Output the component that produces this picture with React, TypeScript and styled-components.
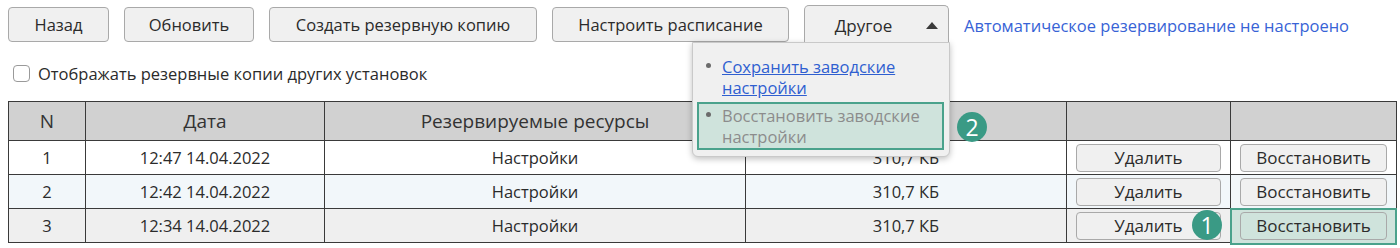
import styled, { createGlobalStyle } from "styled-components";

const GlobalStyle = createGlobalStyle`
  * { box-sizing: border-box; }
  body {
    margin: 0;
    background: #ffffff;
    font-family: "Open Sans", "Noto Sans", sans-serif;
    font-size: 16.5px;
    color: #2b2b2b;
  }
`;

const rows = [
  { n: 1, date: "12:47 14.04.2022", res: "Настройки", size: "310,7 КБ" },
  { n: 2, date: "12:42 14.04.2022", res: "Настройки", size: "310,7 КБ" },
  { n: 3, date: "12:34 14.04.2022", res: "Настройки", size: "310,7 КБ" },
];

const App = () => {
  return (
    <Page>
      <GlobalStyle />
      <Toolbar>
        <ToolButton $w={101}>Назад</ToolButton>
        <ToolButton $w={130}>Обновить</ToolButton>
        <ToolButton $w={268}>Создать резервную копию</ToolButton>
        <ToolButton $w={237}>Настроить расписание</ToolButton>
        <DropWrap>
          <DropTab>
            Другое
            <Caret />
          </DropTab>
          <DropMenu>
            <MenuItem>
              <Bullet />
              <MenuLink>Сохранить заводские настройки</MenuLink>
            </MenuItem>
            <MenuItem $active>
              <Bullet />
              <MenuDisabled>Восстановить заводские настройки</MenuDisabled>
              <Badge $left={258} $top={8}>2</Badge>
            </MenuItem>
          </DropMenu>
        </DropWrap>
        <StatusLink>Автоматическое резервирование не настроено</StatusLink>
      </Toolbar>

      <CheckRow>
        <CheckBox />
        Отображать резервные копии других установок
      </CheckRow>

      <Table>
        <colgroup>
          <col style={{ width: 77 }} />
          <col style={{ width: 239 }} />
          <col style={{ width: 421 }} />
          <col style={{ width: 321 }} />
          <col style={{ width: 164 }} />
          <col style={{ width: 166 }} />
        </colgroup>
        <thead>
          <tr>
            <Th>N</Th>
            <Th>Дата</Th>
            <Th>Резервируемые ресурсы</Th>
            <Th />
            <Th />
            <Th />
          </tr>
        </thead>
        <tbody>
          {rows.map((r, i) => (
            <Tr key={r.n} $idx={i}>
              <Td>{r.n}</Td>
              <Td>{r.date}</Td>
              <Td>{r.res}</Td>
              <Td>{r.size}</Td>
              <Td>
                <CellButton>Удалить</CellButton>
                {i === 2 && <Badge $left={125} $top={1}>1</Badge>}
              </Td>
              <Td>
                {i === 2 && <Highlight />}
                <CellButton $active={i === 2}>Восстановить</CellButton>
              </Td>
            </Tr>
          ))}
        </tbody>
      </Table>
    </Page>
  );
};

export default App;

const Page = styled.div`
  width: 1400px;
  height: 248px;
  padding: 5px 4px 0 8px;
  position: relative;
  overflow: hidden;
`;

const Toolbar = styled.div`
  display: flex;
  align-items: flex-start;
  gap: 15px;
  height: 42px;
`;

const ToolButton = styled.button<{ $w: number }>`
  width: ${(p) => p.$w}px;
  height: 35px;
  margin-top: 2px;
  border: 1px solid #a9a9a9;
  border-radius: 4px;
  background: #f0f0f0;
  font-family: inherit;
  font-size: 16.5px;
  color: #2b2b2b;
  padding: 0;
`;

const DropWrap = styled.div`
  position: relative;
  width: 145px;
  height: 37px;
`;

const DropTab = styled.div`
  position: relative;
  z-index: 3;
  height: 37px;
  border: 1px solid #a9a9a9;
  border-bottom: none;
  border-radius: 5px 5px 0 0;
  background: #f0f0f0;
  display: flex;
  align-items: center;
  justify-content: center;
  padding-right: 26px;
  padding-top: 3px;
  font-size: 17px;
  color: #2b2b2b;
`;

const Caret = styled.span`
  position: absolute;
  right: 10px;
  top: 16px;
  width: 0;
  height: 0;
  border-left: 6px solid transparent;
  border-right: 6px solid transparent;
  border-bottom: 7px solid #3a3a3a;
`;

const DropMenu = styled.div`
  position: absolute;
  z-index: 2;
  right: -1px;
  top: 37px;
  width: 258px;
  height: 115px;
  background: #f0f0f0;
  border: 1px solid #c9c9c9;
  border-radius: 0 0 6px 6px;
  box-shadow: 0 2px 6px rgba(0, 0, 0, 0.25);
  padding: 10px 5px 6px 4px;
  display: flex;
  flex-direction: column;
  gap: 5px;
`;

const MenuItem = styled.div<{ $active?: boolean }>`
  position: relative;
  display: flex;
  align-items: flex-start;
  gap: 11px;
  padding: 1px 8px 1px 7px;
  height: ${(p) => (p.$active ? 48 : 44)}px;
  line-height: 21px;
  font-size: 16.5px;
  border: 2px solid ${(p) => (p.$active ? "#4aa28c" : "transparent")};
  background: ${(p) => (p.$active ? "#cfe3dc" : "transparent")};
`;

const Bullet = styled.span`
  flex: none;
  width: 5px;
  height: 5px;
  border-radius: 50%;
  background: #6b6b6b;
  margin-top: 7px;
`;

const MenuLink = styled.span`
  color: #2f5fd0;
  text-decoration: underline;
`;

const MenuDisabled = styled.span`
  color: #8c8c8c;
`;

const StatusLink = styled.span`
  margin-top: 9px;
  color: #3763d6;
  font-size: 16.5px;
`;

const CheckRow = styled.label`
  display: flex;
  align-items: center;
  gap: 8px;
  height: 28px;
  margin-top: 12px;
  padding-left: 5px;
  font-size: 16.5px;
  color: #2b2b2b;
`;

const CheckBox = styled.span`
  width: 17px;
  height: 17px;
  border: 1px solid #9a9a9a;
  border-radius: 4px;
  background: #fff;
`;

const Table = styled.table`
  margin-top: 14px;
  width: 1388px;
  border-collapse: collapse;
  table-layout: fixed;
  font-size: 16.5px;
  color: #2b2b2b;
`;

const Th = styled.th`
  height: 39px;
  background: #d1d1d1;
  border: 1px solid #3a3a3a;
  font-weight: 500;
  font-size: 19px;
  color: #333;
  text-align: center;
  padding: 0;
`;

const Tr = styled.tr<{ $idx: number }>`
  background: ${(p) =>
    p.$idx === 0 ? "#ffffff" : p.$idx === 1 ? "#f2f7fa" : "#efefef"};
`;

const Td = styled.td`
  position: relative;
  height: 34px;
  border: 1px solid #3a3a3a;
  text-align: center;
  padding: 2px 9px;
`;

const CellButton = styled.button<{ $active?: boolean }>`
  position: relative;
  z-index: 1;
  display: block;
  width: 100%;
  height: 28px;
  border: 1px solid #a9a9a9;
  border-radius: 4px;
  background: ${(p) => (p.$active ? "#cfe3dc" : "#f0f0f0")};
  font-family: inherit;
  font-size: 17px;
  color: #2b2b2b;
  padding: 0;
`;

const Highlight = styled.span`
  position: absolute;
  left: -1px;
  right: -1px;
  top: -1px;
  bottom: -3px;
  border: 2px solid #4aa28c;
  background: #cfe3dc;
  z-index: 0;
`;

const Badge = styled.span<{ $left: number; $top: number }>`
  position: absolute;
  z-index: 4;
  left: ${(p) => p.$left}px;
  top: ${(p) => p.$top}px;
  width: 30px;
  height: 30px;
  border-radius: 50%;
  background: #3a9a85;
  color: #ffffff;
  font-size: 23px;
  line-height: 30px;
  text-align: center;
`;
